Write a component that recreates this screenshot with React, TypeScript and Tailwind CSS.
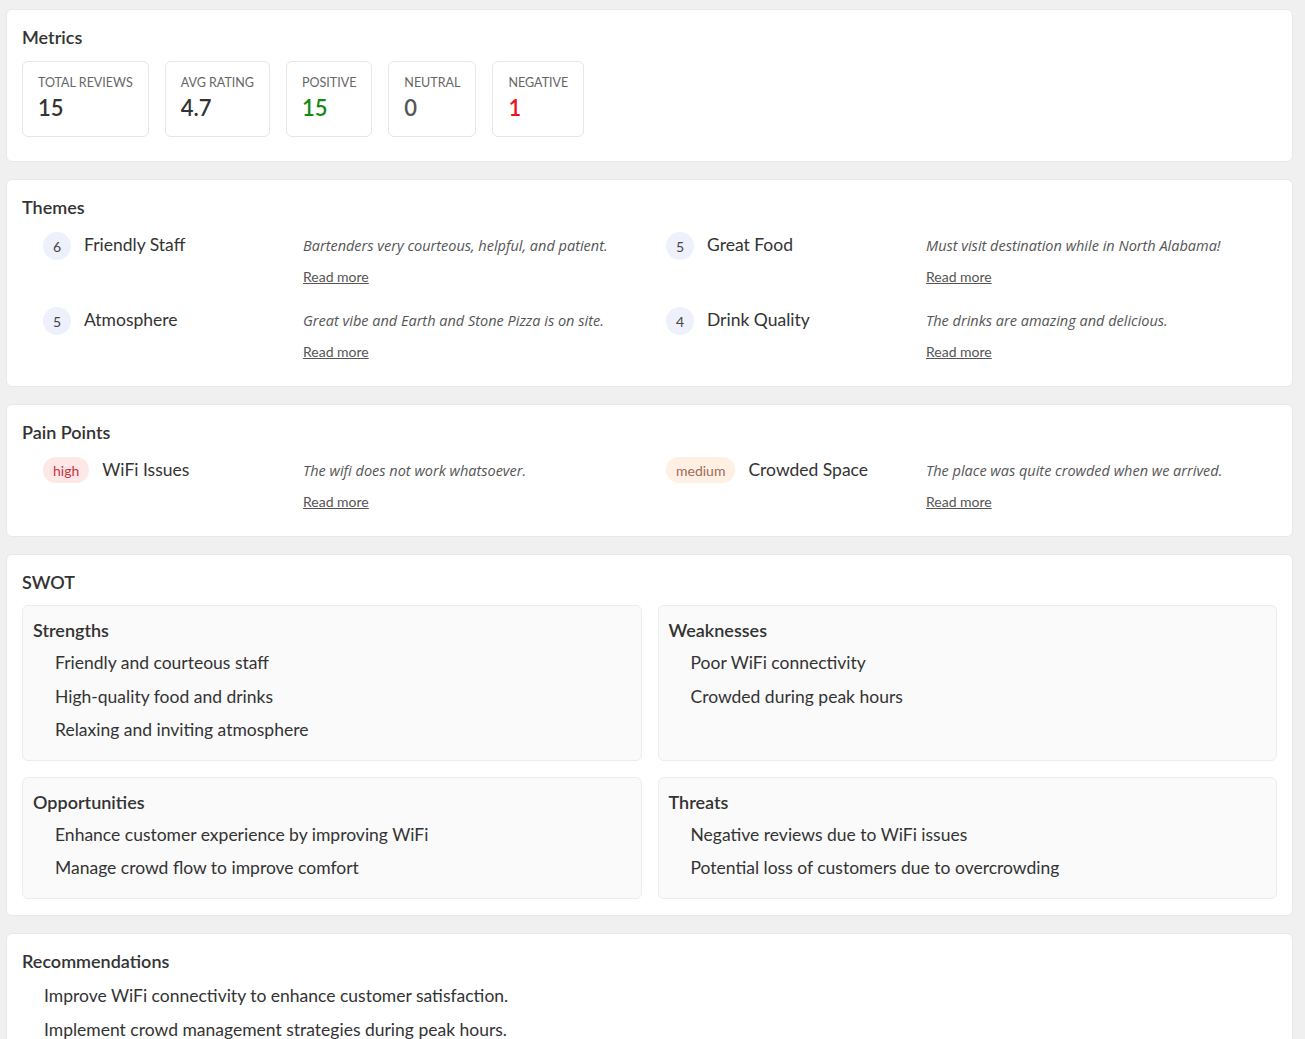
import React from 'react';

type Metric = { label: string; value: string; color: string };
type Theme = { count: number; name: string; quote: string };
type Pain = { severity: 'high' | 'medium'; name: string; quote: string };

const metrics: Metric[] = [
    { label: 'Total Reviews', value: '15', color: 'text-[#333]' },
    { label: 'Avg Rating', value: '4.7', color: 'text-[#333]' },
    { label: 'Positive', value: '15', color: 'text-[#138a13]' },
    { label: 'Neutral', value: '0', color: 'text-[#555]' },
    { label: 'Negative', value: '1', color: 'text-[#f01020]' },
];

const themes: Theme[] = [
    { count: 6, name: 'Friendly Staff', quote: 'Bartenders very courteous, helpful, and patient.' },
    { count: 5, name: 'Great Food', quote: 'Must visit destination while in North Alabama!' },
    { count: 5, name: 'Atmosphere', quote: 'Great vibe and Earth and Stone Pizza is on site.' },
    { count: 4, name: 'Drink Quality', quote: 'The drinks are amazing and delicious.' },
];

const pains: Pain[] = [
    { severity: 'high', name: 'WiFi Issues', quote: 'The wifi does not work whatsoever.' },
    { severity: 'medium', name: 'Crowded Space', quote: 'The place was quite crowded when we arrived.' },
];

const swot = [
    {
        title: 'Strengths',
        items: ['Friendly and courteous staff', 'High-quality food and drinks', 'Relaxing and inviting atmosphere'],
    },
    { title: 'Weaknesses', items: ['Poor WiFi connectivity', 'Crowded during peak hours'] },
    {
        title: 'Opportunities',
        items: ['Enhance customer experience by improving WiFi', 'Manage crowd flow to improve comfort'],
    },
    {
        title: 'Threats',
        items: ['Negative reviews due to WiFi issues', 'Potential loss of customers due to overcrowding'],
    },
];

const recommendations = [
    'Improve WiFi connectivity to enhance customer satisfaction.',
    'Implement crowd management strategies during peak hours.',
];

function Card({ title, children, className = '' }: { title: string; children: React.ReactNode; className?: string }) {
    return (
        <section className={`rounded-md border border-[#e8e8e8] bg-white px-[15px] pt-[15px] ${className}`}>
            <h2 className="text-[18px] leading-[24px] font-semibold text-[#333]">{title}</h2>
            {children}
        </section>
    );
}

function Quote({ text }: { text: string }) {
    return (
        <div className="pt-[4px]">
            <p
                className="text-[14.5px] leading-[20px] italic text-[#555]"
                style={{ fontFamily: '"Open Sans", sans-serif' }}
            >
                {text}
            </p>
            <a href="#" className="mt-[11px] block w-fit text-[14px] leading-[20px] text-[#555] underline">
                Read more
            </a>
        </div>
    );
}

export default function App() {
    return (
        <div
            className="min-h-screen bg-[#f0f0f0] pt-[9px] pl-[6px] pr-[12px] pb-8"
            style={{ fontFamily: 'Lato, "Open Sans", sans-serif' }}
        >
            <div className="flex flex-col gap-[17px]">
                <Card title="Metrics" className="pb-[24px]">
                    <div className="mt-[12px] flex gap-[16px]">
                        {metrics.map(m => (
                            <div key={m.label} className="rounded-md border border-[#e6e6e6] bg-white px-[15px] pt-[11px] pb-[13px]">
                                <div className="text-[12.5px] leading-[20px] uppercase text-[#666]">{m.label}</div>
                                <div className={`text-[22px] leading-[30px] font-semibold ${m.color}`}>{m.value}</div>
                            </div>
                        ))}
                    </div>
                </Card>

                <Card title="Themes" className="pb-[24px]">
                    <ul className="mt-[13px] grid grid-cols-2 gap-x-3 gap-y-[20px] pl-[21px]">
                        {themes.map(t => (
                            <li key={t.name} className="flex">
                                <div className="flex w-[260px] shrink-0 items-start gap-[13px]">
                                    <span className="flex h-[28px] w-[28px] items-center justify-center rounded-full bg-[#eef1fb] text-[14px] text-[#444]">
                                        {t.count}
                                    </span>
                                    <span className="text-[17.5px] leading-[25px] text-[#333]">{t.name}</span>
                                </div>
                                <Quote text={t.quote} />
                            </li>
                        ))}
                    </ul>
                </Card>

                <Card title="Pain Points" className="pb-[24px]">
                    <ul className="mt-[13px] grid grid-cols-2 gap-x-3 pl-[21px]">
                        {pains.map(p => (
                            <li key={p.name} className="flex">
                                <div className="flex w-[260px] shrink-0 items-start gap-[13px]">
                                    <span
                                        className={
                                            p.severity === 'high'
                                                ? 'flex h-[26px] items-center rounded-full bg-[#fde7e7] px-[10px] text-[14px] text-[#c8323c]'
                                                : 'flex h-[26px] items-center rounded-full bg-[#fff0e3] px-[10px] text-[14px] text-[#a06a5a]'
                                        }
                                    >
                                        {p.severity}
                                    </span>
                                    <span className="text-[17.5px] leading-[25px] text-[#333]">{p.name}</span>
                                </div>
                                <Quote text={p.quote} />
                            </li>
                        ))}
                    </ul>
                </Card>

                <Card title="SWOT" className="pb-[16px]">
                    <div className="mt-[11px] grid grid-cols-2 gap-[16px]">
                        {swot.map(s => (
                            <div key={s.title} className="rounded-md border border-[#ececec] bg-[#fafafa] px-[10px] pt-[12px] pb-[17px]">
                                <h3 className="text-[18px] leading-[24px] font-semibold text-[#333]">{s.title}</h3>
                                <ul className="mt-[8px] flex flex-col gap-[8px] pl-[22px]">
                                    {s.items.map(i => (
                                        <li key={i} className="text-[17.5px] leading-[25.5px] text-[#333]">
                                            {i}
                                        </li>
                                    ))}
                                </ul>
                            </div>
                        ))}
                    </div>
                </Card>

                <Card title="Recommendations" className="pb-[16px]">
                    <ul className="mt-[10px] flex flex-col gap-[8px] pl-[22px]">
                        {recommendations.map(r => (
                            <li key={r} className="text-[17.5px] leading-[26px] text-[#333]">
                                {r}
                            </li>
                        ))}
                    </ul>
                </Card>
            </div>
        </div>
    );
}
